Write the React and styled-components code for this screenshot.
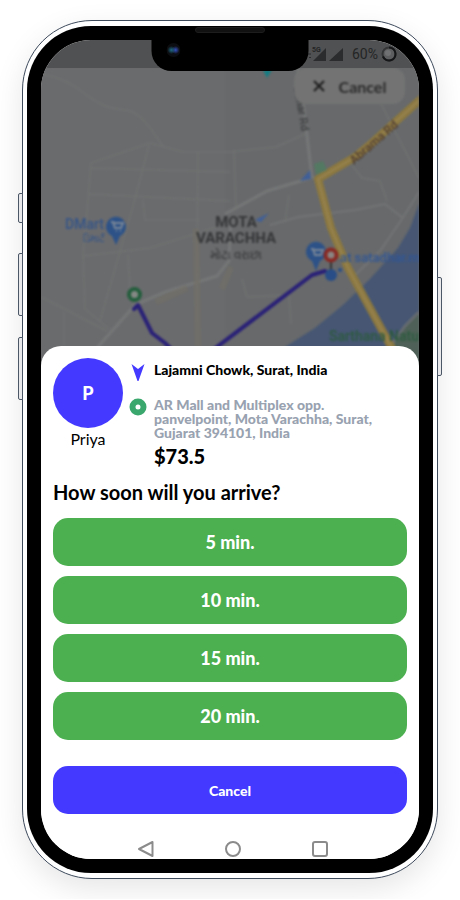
import React from 'react';
import styled, {createGlobalStyle} from "styled-components";

const times = [5, 10, 15, 20];

const StatusIcons = () => (
    <svg width="37" height="18" viewBox="308 45 37 18" aria-hidden="true">
        <path d="M308 54h4M310 57.500h2" stroke="#2b2c2d" strokeWidth="1"/>
        <text x="313" y="52" fontFamily="Roboto, sans-serif" fontSize="7" fontWeight="700" fill="#242526">5G</text>
        <path d="M314 61l13-13v13z" fill="#2b2c2d"/>
        <path d="M330 61l14-13v13z" fill="#2b2c2d"/>
    </svg>
);

const Spinner = () => (
    <svg width="16" height="16" viewBox="0 0 16 16" aria-hidden="true">
        <circle cx="8" cy="8" r="6.500" fill="#5d5e5f" stroke="#343536" strokeWidth="2"/>
        <path d="M8 1.500a6.500 6.500 0 1 1-6 9" fill="none" stroke="#151617" strokeWidth="2"/>
        <circle cx="7" cy="7" r="3" fill="#707172"/>
    </svg>
);

const MapPicture = () => (
    <MapSvg viewBox="41 68 378 298" preserveAspectRatio="xMidYMid slice" role="img" aria-label="Map">
        <rect x="41" y="68" width="378" height="298" fill="#6a6b6d"/>
        <path d="M225 68h194v298h-194z" fill="#67696b"/>
        {/* water */}
        <path d="M419 204l-9 24-12 20-28 31-27 26-28 23-30 19-10 19h144z" fill="#465673"/>
        <path d="M419 312l-14 14-14 20-12 20h40z" fill="#4e6057"/>
        <path d="M419 312l-14 14-14 20" fill="none" stroke="#666b70" strokeWidth="3"/>
        {/* side streets */}
        <g fill="none" stroke="#707271" strokeWidth="1.500">
            <path d="M41 74q20 3 36 14c26 20 32 20 53 23 16 6 24 24 34 36"/>
            <path d="M91 163l59-20 33 9h47l46-5 29-13M91 168l139 4M91 163l-3 38-5 54 2 54 24 20M149 145l-14 54-20 70-15 52M198 152l-1 170M88 194l142 7M41 297l66 34M83 256l67-8 80-25M64 312v34M143 200l2 20h55M128 255l2 35"/>
            <path d="M378 98l42 82M352 165l10 13 18 3 7 20M234 150l2 60M285 222l4-27M242 279l5 18 42-2 2 29"/>
        </g>
        <g fill="none" stroke="#757777" strokeWidth="3" strokeLinejoin="round">
            <path d="M298 68l6 42 8 68M225 214l42-23 47-14M96 349l39-44 30-13 52-16 12-15 2-45"/>
        </g>
        <g fill="none" stroke="#727474" strokeWidth="2">
            <path d="M270 225l28-8 57-7 30-6 18 14M419 192l-17 27-22 32-27 26"/>
        </g>
        <g fill="none" stroke="#736f66" strokeWidth="6" opacity="0.700">
            <path d="M196 229l2 117M156 302l31-14M222 289l9-22"/>
        </g>
        {/* main road */}
        <g fill="none" stroke="#8c783f" strokeWidth="8" strokeLinejoin="round">
            <path d="M423 97l-50 45-18 15-37 22 13 49 17 40 46 84"/>
            <path d="M423 97l-50 45-18 15-37 22 13 49 17 40 46 84" stroke="#968350" strokeWidth="2"/>
        </g>
        <path d="M314 164l9-3 4 9-11 5z" fill="#537962"/>
        <path d="M300 181l10-11 1 9zM255 220l14-7-8 9z" fill="#405f98"/>
        <path d="M263 70h9l-5 8z" fill="#147c82"/>
        {/* route */}
        <g fill="none" stroke="#292077" strokeWidth="4" strokeLinejoin="round" strokeLinecap="round">
            <path d="M134 309l4-4 14 28 13 10 14 14"/>
            <path d="M205 356l107-81 13-4"/>
        </g>
        <circle cx="134.500" cy="294.500" r="5.500" fill="#858985" stroke="#245e3d" strokeWidth="4"/>
        <path d="M116 245l-4-9a10 10 0 1 1 8 0z" fill="#2d5288"/>
        <path d="M111 222h2l2 6h6l2-5h-9M116 231h1M120 231h1" fill="none" stroke="#798697" strokeWidth="2"/>
        <path d="M316 271l-4-10a10 10 0 1 1 8 0z" fill="#2d5288"/>
        <path d="M311 249h2l2 6h6l2-5h-9" fill="none" stroke="#798697" strokeWidth="2"/>
        <path d="M331 260v14" stroke="#333" strokeWidth="2"/>
        <circle cx="331" cy="275" r="6" fill="#284d87"/>
        <circle cx="340" cy="270" r="2" fill="#284d87"/>
        <circle cx="331" cy="255" r="5.500" fill="#8a8583" stroke="#892a24" strokeWidth="4"/>
        {/* labels */}
        <g fontFamily="Roboto, 'Noto Sans', sans-serif" fontSize="14" fontWeight="500">
            <text x="65" y="229" fill="#345488">DMart</text>
            <text x="83" y="242" fontSize="10" fill="#345488">ડિમાર્ટ</text>
            <g fill="#353638" fontSize="15" textAnchor="middle" fontWeight="700">
                <text x="236" y="227">MOTA</text>
                <text x="236" y="243">VARACHHA</text>
                <text x="236" y="259" fontSize="12" fontWeight="400">મોટા વરાછા</text>
            </g>
            <text x="340" y="262" fontSize="13" fill="#2f5696">at satadhar.m</text>
            <text x="329" y="341" fill="#2c5a3e">Sarthana Natu</text>
            <text x="354" y="165" fontSize="12" fill="#4e3c32" transform="rotate(-41 354 165)">Abrama Rd</text>
            <text x="294" y="88" fontSize="11" fill="#3a3c3d" transform="rotate(80 294 88)">abhar Rd</text>
        </g>
    </MapSvg>
);

const App = () => (
    <>
        <GlobalStyle/>
        <Page>
            <Phone>
                <SideKey $top={172} $size={30}/>
                <SideKey $top={232} $size={63}/>
                <SideKey $top={316} $size={63}/>
                <SideKey $right $top={256} $size={99}/>
                <Bezel>
                    <Speaker/>
                    <Notch><Camera/></Notch>
                    <Screen>
                        <StatusBar>
                            <StatusIcons/>
                            <span>60%</span>
                            <Spinner/>
                        </StatusBar>
                        <MapArea>
                            <MapPicture/>
                            <MapCancel type="button">
                                <svg width="12" height="12" viewBox="0 0 12 12" aria-hidden="true">
                                    <path d="M1 1l10 10M11 1L1 11" stroke="#1c1c1d" strokeWidth="2"/>
                                </svg>
                                Cancel
                            </MapCancel>
                        </MapArea>
                        <Sheet>
                            <Trip>
                                <Rider>
                                    <Avatar>P</Avatar>
                                    <RiderName>Priya</RiderName>
                                </Rider>
                                <Route>
                                    <Stop $from>
                                        <svg width="18" height="20" viewBox="0 0 18 20" aria-hidden="true">
                                            <path d="M2.500 2L9 7l6.500-5L9.500 19h-1z" fill="#4339ff"/>
                                        </svg>
                                        <Address>Lajamni Chowk, Surat, India</Address>
                                    </Stop>
                                    <Stop>
                                        <svg width="18" height="18" viewBox="0 0 18 18" aria-hidden="true">
                                            <circle cx="9" cy="9" r="5.500" fill="#fff" stroke="#3aa76d" strokeWidth="6"/>
                                        </svg>
                                        <Address $muted>
                                            AR Mall and Multiplex opp.<br/>
                                            panvelpoint, Mota Varachha, Surat,<br/>
                                            Gujarat 394101, India
                                        </Address>
                                    </Stop>
                                    <Price>$73.5</Price>
                                </Route>
                            </Trip>
                            <Question>How soon will you arrive?</Question>
                            <Choices>
                                {times.map(time => <ChoiceButton type="button" key={time}>{time} min.</ChoiceButton>)}
                            </Choices>
                            <CancelButton type="button">Cancel</CancelButton>
                            <NavBar>
                                <NavButton type="button" aria-label="Back">
                                    <svg width="18" height="18" viewBox="0 0 18 18">
                                        <path d="M15.500 2v14L2 9z"/>
                                    </svg>
                                </NavButton>
                                <NavButton type="button" aria-label="Home">
                                    <svg width="18" height="18" viewBox="0 0 18 18">
                                        <circle cx="9" cy="9" r="7"/>
                                    </svg>
                                </NavButton>
                                <NavButton type="button" aria-label="Recent apps">
                                    <svg width="18" height="18" viewBox="0 0 18 18">
                                        <rect x="2" y="2" width="14" height="14" rx="2"/>
                                    </svg>
                                </NavButton>
                            </NavBar>
                        </Sheet>
                    </Screen>
                </Bezel>
            </Phone>
        </Page>
    </>
);

export default App;

const GlobalStyle = createGlobalStyle`
  * {
    box-sizing: border-box;
  }
  body {
    margin: 0;
    background: #fff;
    font-family: Lato, "Open Sans", sans-serif;
    color: #000;
  }
  button {
    font-family: inherit;
    border: none;
    padding: 0;
    cursor: pointer;
  }
`
const Page = styled.main`
  padding: 20px 22px;
  overflow: hidden;
`
const Phone = styled.div`
  position: relative;
  padding: 5px 4px;
  border: 1px solid #3d4a5c;
  border-radius: 70px;
  background: #fff;
  box-shadow: 0 10px 30px rgba(0, 0, 0, 0.1);
`
const SideKey = styled.span`
  position: absolute;
  top: ${props => props.$top}px;
  ${props => props.$right ? "right" : "left"}: -5px;
  width: 5px;
  height: ${props => props.$size}px;
  border: 1px solid #4b5766;
  border-radius: ${props => props.$right ? "0 2px 2px 0" : "2px 0 0 2px"};
  background: #e9e9ec;
`
const Bezel = styled.div`
  position: relative;
  padding: 14px;
  border-radius: 64px;
  background: #000;
`
const Speaker = styled.div`
  position: absolute;
  top: 1px;
  left: 50%;
  width: 70px;
  height: 6px;
  border: 1px solid #1d1d1d;
  border-radius: 3px;
  background: #111;
  transform: translateX(-50%);
`
const Notch = styled.div`
  position: absolute;
  z-index: 2;
  top: 13px;
  left: 50%;
  width: 157px;
  height: 32px;
  border-radius: 0 0 20px 20px;
  background: #000;
  transform: translateX(-50%);
`
const Camera = styled.div`
  position: absolute;
  top: 4px;
  left: 15px;
  width: 14px;
  height: 14px;
  border-radius: 50%;
  background: radial-gradient(circle at 35% 50%, #1f6a85 0, transparent 4px),
    radial-gradient(circle at 65% 50%, #3450c0 0, transparent 4px), #0c0d10;
`
const Screen = styled.div`
  overflow: hidden;
  border-radius: 50px;
  background: #fff;
`
const StatusBar = styled.div`
  position: relative;
  z-index: 1;
  display: flex;
  align-items: center;
  justify-content: flex-end;
  height: 28px;
  padding-right: 22px;
  gap: 3px;
  background: #505152;
  color: #242526;
  font-family: Roboto, sans-serif;
  font-size: 14px;

  svg:first-child {
    margin-right: 5px;
  }
`
const MapArea = styled.div`
  position: relative;
  height: 298px;
  overflow: hidden;
  background: #6a6b6d;
`
const MapSvg = styled.svg`
  display: block;
  width: 100%;
  height: 100%;
  filter: blur(1px);
`
const MapCancel = styled.button`
  position: absolute;
  top: 0;
  right: 14px;
  display: flex;
  align-items: center;
  justify-content: center;
  gap: 14px;
  width: 111px;
  height: 36px;
  border-radius: 12px;
  background: #737373;
  color: #2b2b2c;
  font-size: 16px;
  font-weight: 700;
  filter: blur(1px);
`
const Sheet = styled.section`
  position: relative;
  margin-top: -20px;
  padding: 12px 12px 0;
  border-radius: 20px 20px 0 0;
  background: #fff;
`
const Trip = styled.div`
  display: flex;
  gap: 6px;
`
const Rider = styled.div`
  flex: none;
  width: 70px;
  text-align: center;
`
const Avatar = styled.div`
  display: flex;
  align-items: center;
  justify-content: center;
  height: 70px;
  border-radius: 50%;
  background: #4339ff;
  color: #fff;
  font-size: 18px;
  font-weight: 900;
`
const RiderName = styled.div`
  font-size: 16px;
  line-height: 22px;
`
const Route = styled.div`
  flex: 1;
  padding-top: 4px;
`
const Stop = styled.div`
  display: flex;
  gap: 7px;
  min-height: ${props => props.$from ? "36px" : "46px"};

  svg {
    flex: none;
  }
`
const Address = styled.p`
  margin: 0;
  padding-top: ${props => props.$muted ? "0" : "1px"};
  color: ${props => props.$muted ? "#98a2b0" : "#000"};
  font-size: 14px;
  font-weight: 900;
  line-height: 14px;
`
const Price = styled.div`
  padding-left: 25px;
  font-size: 20px;
  font-weight: 900;
  line-height: 24px;
`
const Question = styled.h1`
  margin: 12px 0 14px;
  font-size: 20px;
  font-weight: 700;
  line-height: 24px;
`
const Choices = styled.div`
  display: grid;
  gap: 10px;
`
const ActionButton = styled.button`
  width: 100%;
  height: 48px;
  border-radius: 15px;
  color: #fff;
  font-weight: 900;
`
const ChoiceButton = styled(ActionButton)`
  background: #4caf50;
  font-size: 18px;
`
const CancelButton = styled(ActionButton)`
  margin-top: 26px;
  background: #4339ff;
  font-size: 14px;
`
const NavBar = styled.nav`
  display: flex;
  justify-content: center;
  gap: 69px;
  height: 45px;
  padding: 26px 0 0 6px;
`
const NavButton = styled.button`
  width: 18px;
  height: 18px;
  background: none;

  svg {
    display: block;
    fill: none;
    stroke: #8b8b8b;
    stroke-width: 2;
    stroke-linejoin: round;
  }
`
